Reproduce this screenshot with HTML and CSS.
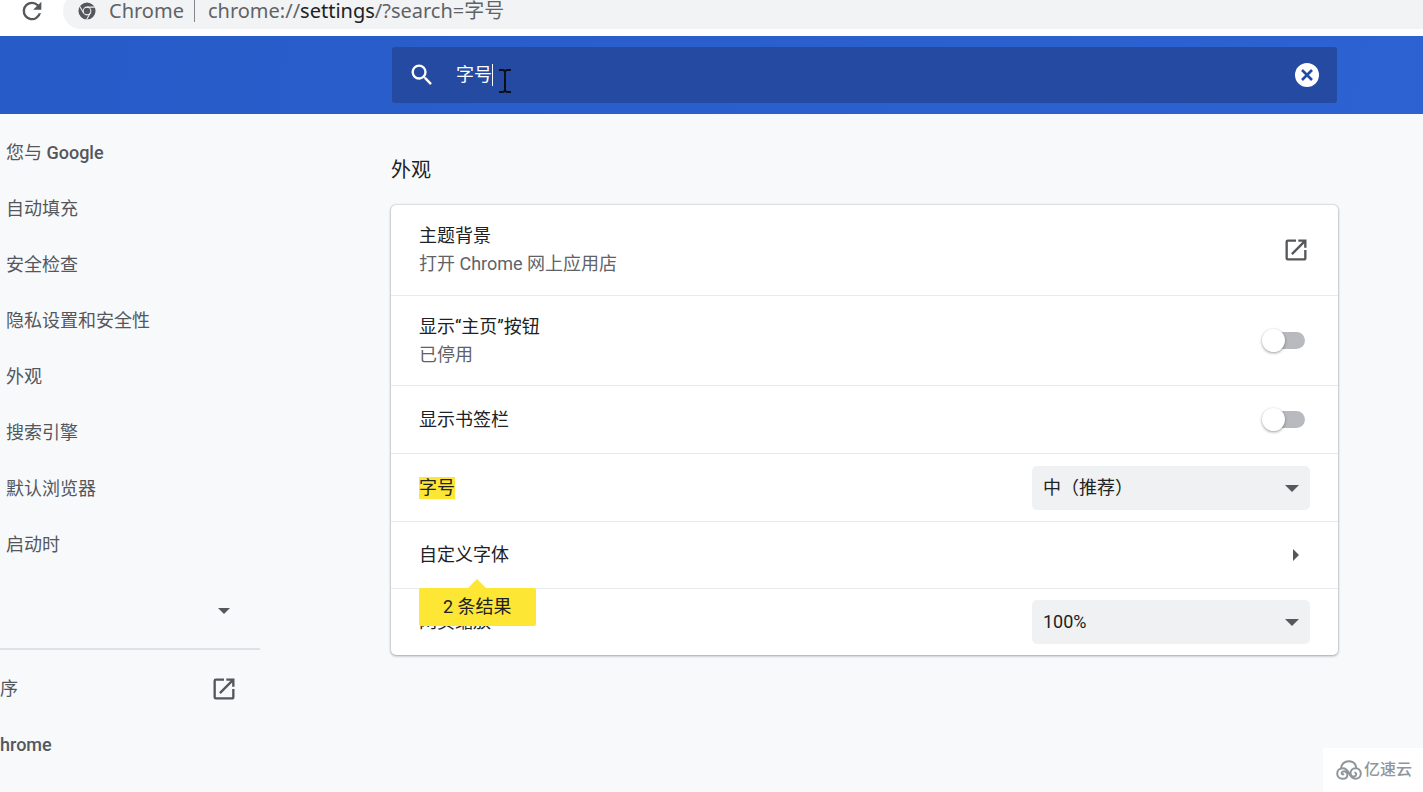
FILE: index.html
```html
<!DOCTYPE html>
<html lang="zh-CN">
<head>
<meta charset="utf-8">
<title>设置</title>
<link rel="stylesheet" href="styles.css">
</head>
<body>
<svg class="symbols" aria-hidden="true">
  <symbol id="external" viewBox="0 0 24 24"><path d="M19 19H5V5h7V3H5a2 2 0 0 0-2 2v14a2 2 0 0 0 2 2h14c1.100 0 2-.9 2-2v-7h-2v7zM14 3v2h3.590l-9.830 9.830 1.410 1.410L19 6.410V10h2V3h-7z"/></symbol>
</svg>
<div class="browser-bar">
  <button class="reload" aria-label="重新加载">
    <svg viewBox="0 0 24 24"><path d="M17.650 6.350A7.960 7.960 0 0 0 12 4a8 8 0 1 0 7.730 10h-2.080A6 6 0 1 1 12 6c1.660 0 3.140.69 4.220 1.780L13 11h7V4l-2.350 2.350z"/></svg>
  </button>
  <div class="address">
    <svg class="chrome-logo" viewBox="0 0 20 20"><circle cx="10" cy="10" r="9.500" fill="#54575b"/><circle cx="10" cy="10" r="4.300" fill="none" stroke="#f1f3f4" stroke-width="1.200"/><circle cx="10" cy="10" r="2.400" fill="#54575b" /><path d="M10 5.700h8.600M6.300 12.200 2 4.900M13.700 12.200 9.600 19.400" stroke="#f1f3f4" stroke-width="1.200" fill="none"/></svg>
    <span class="scheme">Chrome</span>
    <span class="address-divider"></span>
    <span class="url">chrome://<b>settings</b>/?search=字号</span>
  </div>
</div>
<header class="toolbar">
  <div class="search">
    <svg class="search-icon" viewBox="0 0 24 24"><path d="M15.500 14h-.79l-.28-.27A6.470 6.470 0 0 0 16 9.500 6.500 6.500 0 1 0 9.500 16c1.610 0 3.090-.59 4.230-1.570l.27.28v.79l5 4.990L20.490 19l-4.990-5zm-6 0a4.500 4.500 0 1 1 0-9 4.500 4.500 0 0 1 0 9z"/></svg>
    <div class="field">
      <input class="search-input" type="text" value="字号" aria-label="在设置中搜索">
      <span class="caret"></span>
      <svg class="pointer" viewBox="0 0 14 26"><path d="M1 2h4l2 1 2-1h4M1 24h4l2-1 2 1h4M7 3v20" fill="none" stroke="#0b0f1a" stroke-width="2"/></svg>
    </div>
    <button class="clear" aria-label="清除搜索内容"><svg viewBox="0 0 24 24"><circle cx="12" cy="12" r="12" fill="#fff"/><path d="m7 7 10 10m0-10-10 10" stroke="#244ba4" stroke-width="2.600"/></svg></button>
  </div>
</header>
<div class="page">
  <nav class="sidebar">
    <a href="#people">您与 <span class="latin">Google</span></a>
    <a href="#autofill">自动填充</a>
    <a href="#safety">安全检查</a>
    <a href="#privacy">隐私设置和安全性</a>
    <a href="#appearance">外观</a>
    <a href="#search">搜索引擎</a>
    <a href="#browser">默认浏览器</a>
    <a href="#startup">启动时</a>
    <button class="advanced" aria-label="高级"><span class="arrow-down"></span></button>
    <hr>
    <a class="edge" href="#extensions">序 <svg class="external"><use href="#external"/></svg></a>
    <a class="edge" href="#about"><span class="latin">hrome</span></a>
  </nav>
  <main class="content">
    <h2 class="heading" id="appearance">外观</h2>
    <section class="card">
      <div class="row tall">
        <div class="label"><span>主题背景</span><span class="sub">打开 Chrome 网上应用店</span></div>
        <button class="icon-button" aria-label="主题背景"><svg class="external"><use href="#external"/></svg></button>
      </div>
      <div class="row tall">
        <label class="label" for="home"><span>显示“主页”按钮</span><span class="sub">已停用</span></label>
        <input class="toggle" type="checkbox" id="home">
      </div>
      <div class="row">
        <label class="label" for="bookmarks">显示书签栏</label>
        <input class="toggle" type="checkbox" id="bookmarks">
      </div>
      <div class="row anchor">
        <label class="label" for="size"><mark>字号</mark></label>
        <div class="select"><select id="size"><option>中（推荐）</option></select><span class="arrow-down"></span></div>
        <div class="bubble">2 条结果</div>
      </div>
      <div class="row">
        <span class="label">自定义字体</span>
        <button class="icon-button" aria-label="自定义字体"><span class="arrow-right"></span></button>
      </div>
      <div class="row">
        <label class="label" for="zoom">网页缩放</label>
        <div class="select"><select id="zoom"><option>100%</option></select><span class="arrow-down"></span></div>
      </div>
    </section>
  </main>
</div>
<div class="watermark">
  <svg viewBox="0 0 26 20"><g fill="none" stroke="#8f959c" stroke-width="2" stroke-linecap="round"><path d="M5 8.500C5 4 8.500 1.200 12.800 1.200c3.800 0 6.700 2.300 7.400 6"/><path d="M7.300 14.300c-1.600.5-2.500-1.800-.6-2.700 2.200-1 4.700.6 4.700 3.100 0 2.400-1.900 4.100-4.700 4.100C3.300 18.800 1.200 16.600 1.200 13.600c0-3.100 2.400-5.400 5.600-5.400 3.400 0 5 2.400 6.300 5.200 1.500 3.300 3 5.400 6.300 5.400 3.300 0 5.400-2.300 5.400-5.200 0-3.100-2.200-5.400-5.300-5.400-3 0-5 2.300-5 4.900 0 2.200 1.600 3.500 3.500 3.400 2.300-.1 3-3 1.200-3.900"/></g></svg>
  <span>亿速云</span>
</div>
</body>
</html>
```
FILE: styles.css
```css
* { box-sizing: border-box; }

body {
  margin: 0;
  min-height: 100vh;
  position: relative;
  overflow: hidden;
  background: #f8f9fb;
  color: #202124;
  font: 18px/28px Roboto, "Noto Sans CJK SC", sans-serif;
}

button {
  padding: 0;
  border: 0;
  background: none;
  color: inherit;
  font: inherit;
}

svg { display: block; fill: currentColor; }
.symbols { display: none; }

.browser-bar {
  display: flex;
  align-items: flex-end;
  height: 36px;
  padding-bottom: 7px;
  overflow: hidden;
  background: #fff;
  color: #5f6368;
}
.reload { margin: 0 17px 4px 18px; color: #54575b; }
.reload svg { width: 28px; height: 28px; }
.address {
  display: flex;
  flex: 1;
  flex-shrink: 0;
  align-items: center;
  height: 36px;
  padding-left: 15px;
  border-radius: 18px 0 0 18px;
  background: #f1f3f4;
  font: 20px/36px "Noto Sans", "Noto Sans CJK SC", sans-serif;
}
.chrome-logo { width: 18px; height: 18px; margin-right: 13px; }
.address-divider { width: 1px; height: 22px; margin: 0 13px 0 10px; background: #80868b; }
.url b { color: #202124; font-weight: 400; }

.toolbar {
  padding: 11px 86px 11px 392px;
  background: linear-gradient(100deg, #265bc8, #2d62d2);
}
.search {
  display: flex;
  align-items: center;
  height: 56px;
  padding: 0 18px 0 16px;
  border-radius: 3px;
  background: #244ba1;
  color: #fff;
}
.search-icon { width: 28px; height: 28px; margin-right: 20px; }
.field { position: relative; flex: 1; }
.search-input {
  display: block;
  width: 100%;
  height: 28px;
  padding: 0;
  border: 0;
  outline: 0;
  background: none;
  color: inherit;
  font: inherit;
}
.caret { position: absolute; left: 36px; top: 3px; width: 1px; height: 22px; background: #fff; }
.pointer { position: absolute; left: 42px; top: 7px; width: 14px; height: 26px; }
.clear svg { width: 24px; height: 24px; }

.page { display: flex; }

.sidebar {
  width: 260px;
  margin-right: 131px;
  padding-top: 11px;
  color: #54575b;
}
.sidebar a {
  display: flex;
  align-items: center;
  height: 56px;
  padding: 0 22px 0 6px;
  color: inherit;
  text-decoration: none;
  white-space: pre;
}
.latin { font-weight: 500; }
.sidebar a.edge { justify-content: space-between; padding-left: 0; }
.advanced { display: flex; justify-content: flex-end; align-items: center; width: 100%; height: 75px; padding-right: 30px; }
.sidebar hr { height: 2px; margin: 0 0 11px; border: 0; background: #e0e1e4; }

.external { width: 28px; height: 28px; color: #54575b; }
.arrow-down { border: 6px solid transparent; border-top-color: #54575b; border-bottom: 0; }
.arrow-right { border: 6px solid transparent; border-left-color: #54575b; border-right: 0; }

.content { flex: 1; padding: 42px 85px 40px 0; }
.heading { margin: 0 0 20px; font-size: 20px; line-height: 29px; font-weight: 400; }

.card {
  border-radius: 5px;
  background: #fff;
  box-shadow: 0 1px 3px rgba(60, 64, 67, .4), 0 0 2px rgba(60, 64, 67, .3);
}
.row {
  display: flex;
  align-items: center;
  min-height: 68px;
  padding: 0 28px;
}
.row + .row { border-top: 1px solid #e8eaed; }
.row:nth-last-child(-n + 2) { min-height: 67px; }
.row.tall { min-height: 90px; }
.anchor { position: relative; }
.label { display: flex; flex-direction: column; flex: 1; align-items: flex-start; }
.sub { color: #5f6368; }
mark { background: #fde734; color: #202124; line-height: 22px; }

.icon-button { display: flex; justify-content: center; width: 28px; }

.toggle {
  appearance: none;
  position: relative;
  width: 40px;
  height: 17px;
  margin: 0 5px 0 0;
  border-radius: 9px;
  background: #b8babf;
}
.toggle::before {
  content: "";
  position: absolute;
  left: -3px;
  top: -3px;
  width: 23px;
  height: 23px;
  border-radius: 50%;
  background: #fff;
  box-shadow: 0 1px 3px rgba(0, 0, 0, .4);
}

.select { position: relative; width: 278px; }
.select select {
  appearance: none;
  display: block;
  width: 100%;
  height: 44px;
  padding: 0 11px;
  border: 0;
  border-radius: 5px;
  background: #f0f1f2;
  color: #202124;
  font: inherit;
}
.select .arrow-down { position: absolute; right: 11px; top: 19px; border-width: 7px 7px 0; }

.bubble {
  position: absolute;
  z-index: 1;
  left: 28px;
  top: 134px;
  padding: 5px 24px;
  border-radius: 2px;
  background: #fde734;
}
.bubble::before {
  content: "";
  position: absolute;
  left: 50%;
  top: -9px;
  margin-left: -9px;
  border: 9px solid transparent;
  border-top: 0;
  border-bottom-color: #fde734;
}

.watermark {
  position: absolute;
  right: 0;
  bottom: 0;
  display: flex;
  align-items: center;
  gap: 2px;
  height: 44px;
  padding: 0 11px 0 13px;
  background: #fff;
  color: #8f959c;
  font-size: 16px;
  font-weight: 500;
}
.watermark svg { width: 26px; height: 20px; }
```
